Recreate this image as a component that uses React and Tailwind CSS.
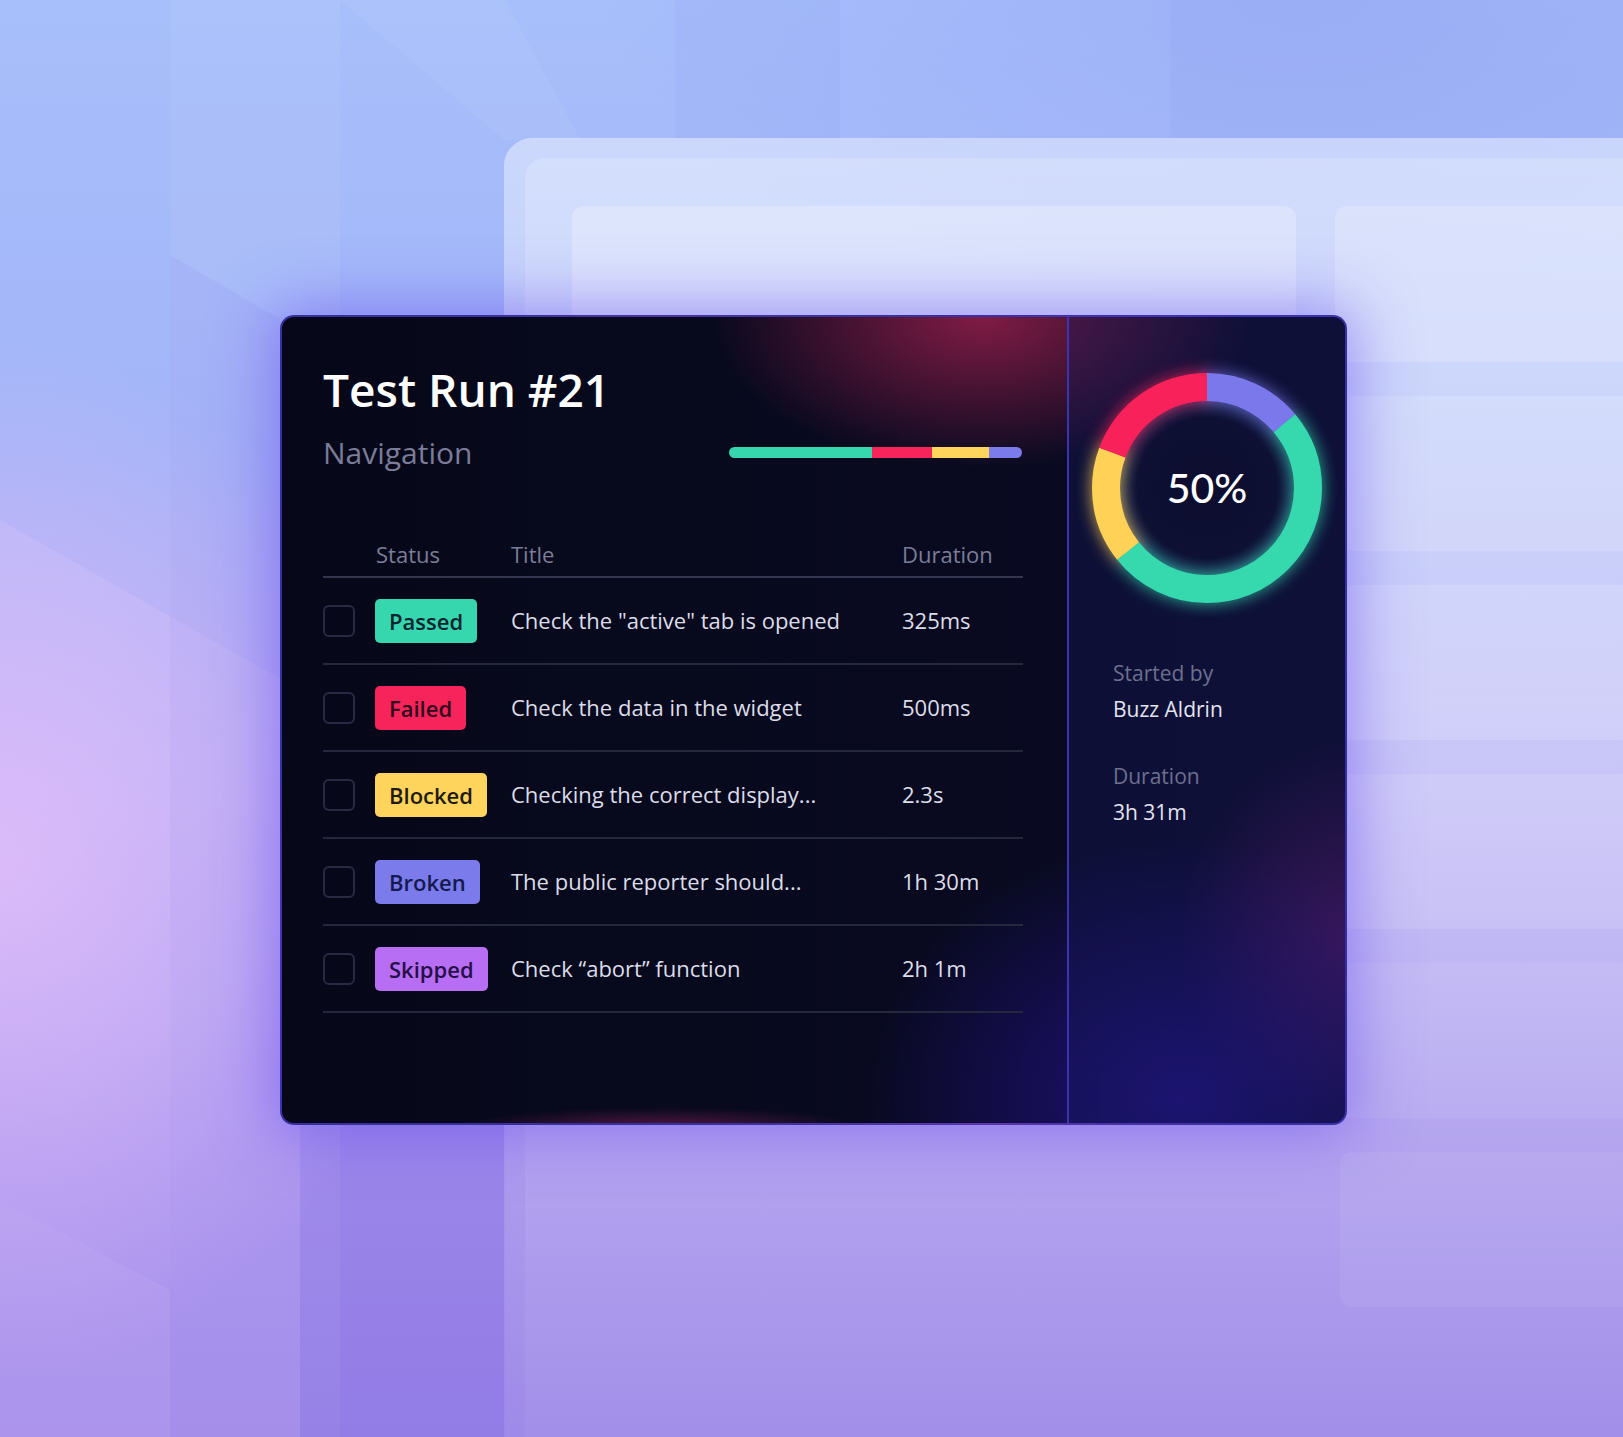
import React from "react";

const rows = [
  { status: "Passed", badge: "bg-[#36d7ae] text-[#0b2530]", title: 'Check the "active" tab is opened', dur: "325ms" },
  { status: "Failed", badge: "bg-[#f6245b] text-[#2e0a1c]", title: "Check the data in the widget", dur: "500ms" },
  { status: "Blocked", badge: "bg-[#ffd45c] text-[#1e1a10]", title: "Checking the correct display...", dur: "2.3s" },
  { status: "Broken", badge: "bg-[#7b7bec] text-[#141a50]", title: "The public reporter should...", dur: "1h 30m" },
  { status: "Skipped", badge: "bg-[#b86ef4] text-[#26104a]", title: "Check \u201cabort\u201d function", dur: "2h 1m" },
];

const R = 101;
const C = 2 * Math.PI * R;
const segs = [
  { c: "#7b78ec", s: 0, e: 50 },
  { c: "#36d8ae", s: 50, e: 231 },
  { c: "#ffd257", s: 231, e: 290 },
  { c: "#f8215a", s: 290, e: 360 },
];

function Ring({ blur }) {
  return segs.map((g, i) => {
    const len = ((g.e - g.s) / 360) * C;
    const off = (g.s / 360) * C;
    return (
      <circle
        key={i}
        cx="130"
        cy="130"
        r={R}
        fill="none"
        stroke={g.c}
        strokeWidth={blur ? 30 : 28}
        strokeDasharray={`${len} ${C}`}
        strokeDashoffset={-off}
      />
    );
  });
}

function Donut() {
  return (
    <div className="relative mx-auto h-[260px] w-[260px]">
      <svg width="260" height="260" viewBox="0 0 260 260">
        <defs>
          <filter id="glow" x="-30%" y="-30%" width="160%" height="160%">
            <feGaussianBlur stdDeviation="8" />
          </filter>
          <radialGradient id="inner" cx="50%" cy="50%" r="50%">
            <stop offset="0%" stopColor="#0c0d2e" />
            <stop offset="80%" stopColor="#0e1034" />
            <stop offset="100%" stopColor="#1a2a55" />
          </radialGradient>
        </defs>
        <circle cx="130" cy="130" r="88" fill="url(#inner)" />
        <g transform="rotate(-90 130 130)">
          <g filter="url(#glow)" opacity="0.75">
            <Ring blur />
          </g>
          <Ring />
        </g>
      </svg>
      <div className="absolute inset-0 flex items-center justify-center font-['Lato',sans-serif] text-[41px] font-medium text-white">
        50%
      </div>
    </div>
  );
}

export default function App() {
  return (
    <div className="relative h-[1437px] w-[1623px] overflow-hidden bg-[linear-gradient(180deg,#a7bffb_0%,#a3b5f8_30%,#afa9f4_55%,#9f8beb_80%,#957fe6_100%)] font-['Open_Sans',sans-serif]">
      {/* background decoration */}
      <div className="absolute inset-0 bg-[radial-gradient(ellipse_420px_520px_at_0px_860px,rgba(228,188,250,0.8),transparent)]" />
      <div className="absolute inset-0 bg-[radial-gradient(ellipse_700px_300px_at_1300px_0px,rgba(140,150,240,0.35),transparent)]" />
      <div className="absolute inset-0 bg-white/5 [clip-path:polygon(170px_0,340px_0,340px_1437px,170px_1437px)]" />
      <div className="absolute inset-0 bg-[#e8cbff]/20 [clip-path:polygon(0_520px,300px_690px,300px_1437px,0_1437px)]" />
      <div className="absolute inset-0 bg-[#6e5ee0]/8 [clip-path:polygon(170px_255px,505px_450px,505px_1437px,170px_1437px)]" />
      <div className="absolute inset-0 bg-white/5 [clip-path:polygon(340px_0,505px_0,580px_140px,505px_140px)]" />
      <div className="absolute inset-0 bg-[#7e8ff0]/10 [clip-path:polygon(675px_0,840px_0,840px_138px,675px_138px)]" />
      <div className="absolute inset-0 bg-[#7e8ff0]/10 [clip-path:polygon(1170px_0,1623px_0,1623px_138px,1170px_138px)]" />
      <div className="absolute inset-0 bg-[#c9b0f5]/20 [clip-path:polygon(0_1200px,170px_1290px,170px_1437px,0_1437px)]" />

      {/* back window */}
      <div className="absolute left-[504px] top-[138px] right-[-40px] bottom-[-40px] rounded-tl-[28px] bg-[linear-gradient(180deg,rgba(255,255,255,0.42),rgba(255,255,255,0.28)_35%,rgba(255,255,255,0.08))]" />
      <div className="absolute left-[525px] top-[158px] right-[-40px] bottom-[-40px] rounded-tl-[20px] bg-[linear-gradient(180deg,rgba(255,255,255,0.18),rgba(255,255,255,0.04))]" />
      <div className="absolute left-[572px] top-[206px] h-[130px] w-[724px] rounded-[12px] bg-white/25" />
      <div className="absolute left-[1335px] top-[206px] h-[156px] w-[320px] rounded-[12px] bg-white/20" />
      <div className="absolute left-[1340px] top-[396px] flex w-[320px] flex-col gap-[34px]">
        <div className="h-[155px] rounded-[12px] bg-white/15" />
        <div className="h-[155px] rounded-[12px] bg-white/14" />
        <div className="h-[155px] rounded-[12px] bg-white/12" />
        <div className="h-[155px] rounded-[12px] bg-white/8" />
        <div className="h-[155px] rounded-[12px] bg-white/6" />
      </div>

      {/* card */}
      <div className="relative z-10 ml-[280px] mt-[315px] flex h-[810px] w-[1067px] overflow-hidden rounded-[14px] border-2 border-[#4b40d8]/70 bg-[radial-gradient(ellipse_270px_150px_at_700px_0px,rgba(150,30,75,0.85),transparent),radial-gradient(ellipse_320px_260px_at_900px_780px,rgba(40,20,160,0.7),transparent),radial-gradient(ellipse_170px_200px_at_1067px_620px,rgba(130,30,120,0.55),transparent),radial-gradient(ellipse_200px_20px_at_380px_810px,rgba(170,40,110,0.45),transparent),linear-gradient(90deg,#060819,#0a0b24)] shadow-[0_0_60px_8px_rgba(100,70,240,0.5)]">
        {/* left */}
        <div className="w-[785px] pl-[41px] pr-[44px] pt-[49px]">
          <div className="text-[46px] font-semibold leading-[46px] text-white">Test Run #21</div>
          <div className="mt-[26px] flex h-[29px] items-center justify-between">
            <div className="text-[30px] leading-[29px] text-[#7a7c98]">Navigation</div>
            <div className="mr-[1px] flex h-[11px] w-[293px] overflow-hidden rounded-full">
              <div className="w-[143px] bg-[#36d7ae]" />
              <div className="w-[60px] bg-[#f6245b]" />
              <div className="w-[57px] bg-[#ffd45c]" />
              <div className="flex-1 bg-[#7b7bec]" />
            </div>
          </div>

          <div className="mt-[76px] grid grid-cols-[52px_136px_391px_1fr] border-b-2 border-[#34364f] pb-[11px] text-[22px] leading-[22px] text-[#7b7d97]">
            <div />
            <div className="pl-[1px]">Status</div>
            <div>Title</div>
            <div>Duration</div>
          </div>

          {rows.map((r) => (
            <div
              key={r.status}
              className="grid h-[87px] grid-cols-[52px_136px_391px_1fr] items-center border-b-2 border-[#25273d] text-[22px] text-[#dcdde9]"
            >
              <div className="h-[32px] w-[32px] rounded-[6px] border-2 border-[#272a42]" />
              <div>
                <span className={`inline-flex h-[44px] items-center rounded-[5px] px-[14px] font-semibold leading-none ${r.badge}`}>
                  {r.status}
                </span>
              </div>
              <div className="whitespace-nowrap">{r.title}</div>
              <div>{r.dur}</div>
            </div>
          ))}
        </div>

        {/* right */}
        <div className="flex-1 border-l-2 border-[#3b34b0] bg-[rgba(24,26,95,0.35)] pt-[41px]">
          <Donut />
          <div className="mt-[37px] pl-[44px] text-[21px] leading-[36px]">
            <div className="text-[#6d6f8f]">Started by</div>
            <div className="text-[#e2e3ee]">Buzz Aldrin</div>
            <div className="mt-[31px] text-[#6d6f8f]">Duration</div>
            <div className="text-[#e2e3ee]">3h 31m</div>
          </div>
        </div>
      </div>
    </div>
  );
}
